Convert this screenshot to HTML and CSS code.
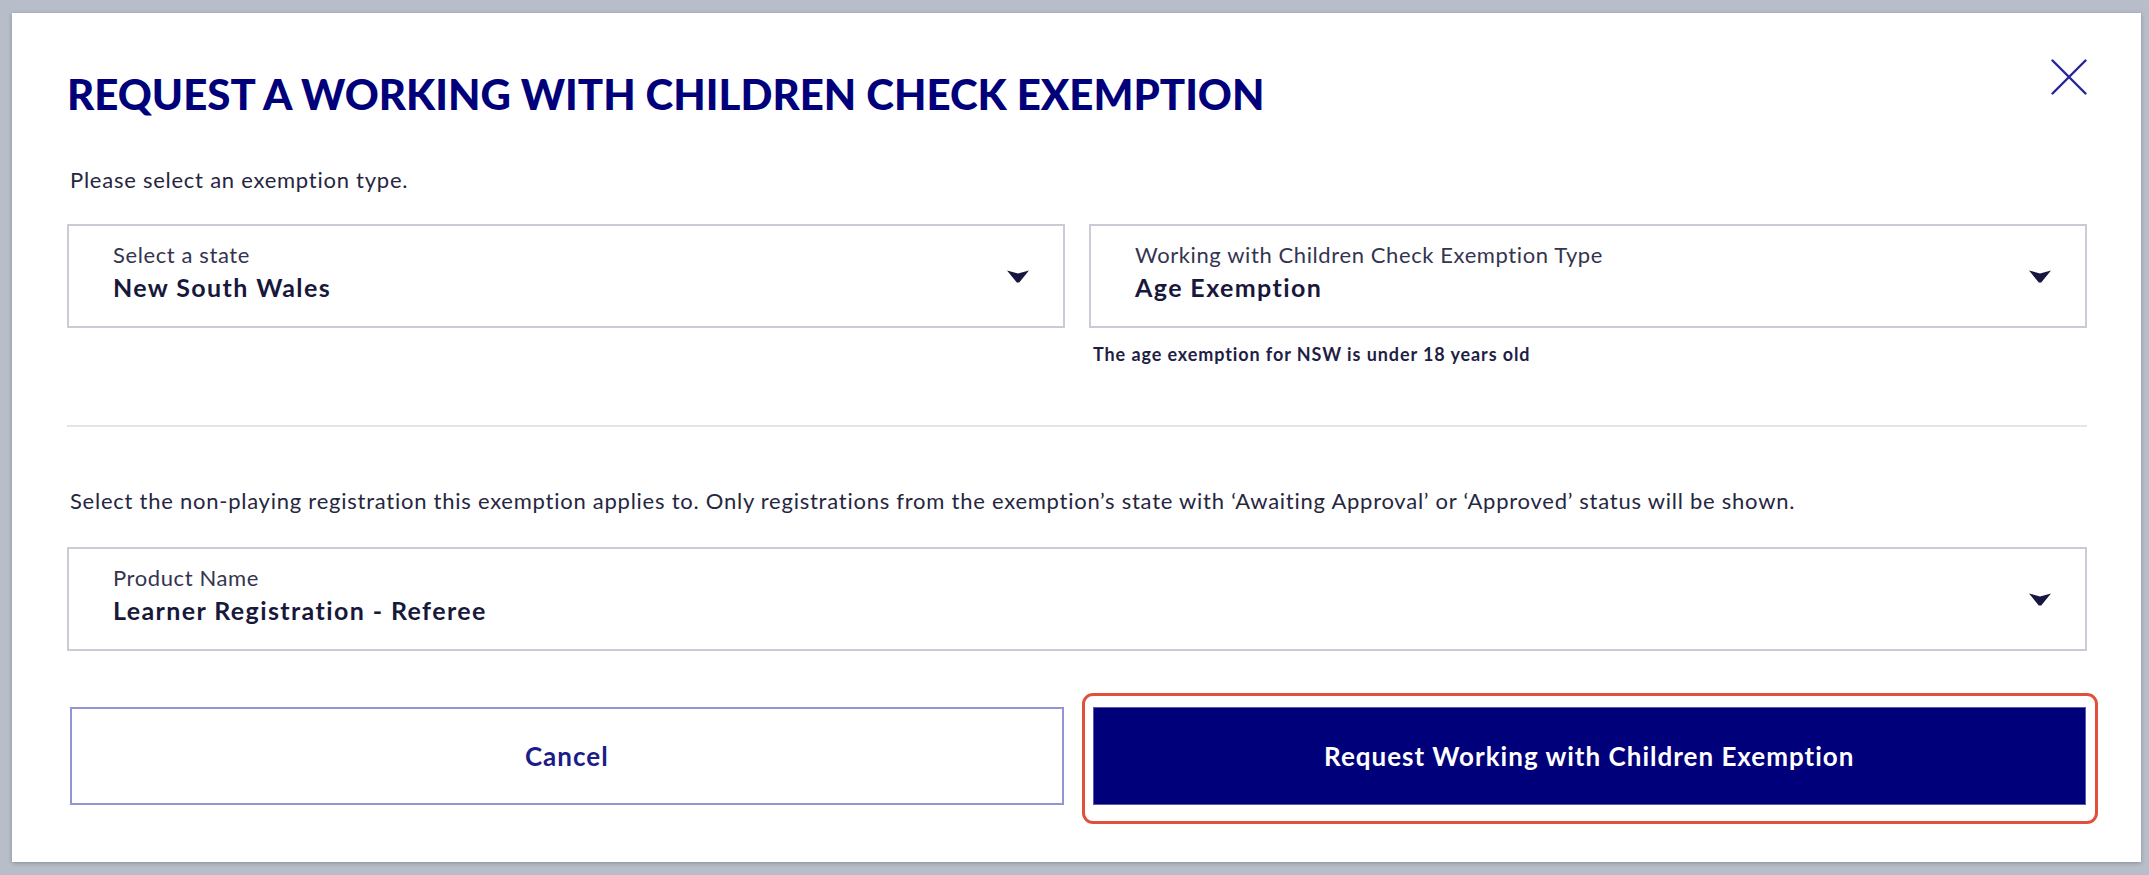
FILE: index.html
```html
<!DOCTYPE html>
<html lang="en">
<head>
<meta charset="utf-8">
<title>Request a Working with Children Check Exemption</title>
<link rel="stylesheet" href="styles.css">
</head>
<body>
<div class="modal">
  <div class="modal-header">
    <h1 class="modal-title">REQUEST A WORKING WITH CHILDREN CHECK EXEMPTION</h1>
    <button class="close-btn" aria-label="Close">
      <svg width="36" height="36" viewBox="0 0 36 36"><path d="M1.5 1.5 L34.5 34.5 M34.5 1.5 L1.5 34.5" stroke="#25259a" stroke-width="2.4" fill="none" stroke-linecap="round"/></svg>
    </button>
  </div>

  <p class="intro">Please select an exemption type.</p>

  <div class="select-row">
    <div class="field">
      <div class="select-box">
        <div class="select-text">
          <div class="select-label">Select a state</div>
          <div class="select-value">New South Wales</div>
        </div>
        <svg class="caret" width="22" height="13" viewBox="0 0 22 13"><path d="M0 0.5 L11 3.5 L22 0.5 L12.2 12.5 L9.8 12.5 Z" fill="#161640"/></svg>
      </div>
    </div>
    <div class="field">
      <div class="select-box">
        <div class="select-text">
          <div class="select-label">Working with Children Check Exemption Type</div>
          <div class="select-value">Age Exemption</div>
        </div>
        <svg class="caret" width="22" height="13" viewBox="0 0 22 13"><path d="M0 0.5 L11 3.5 L22 0.5 L12.2 12.5 L9.8 12.5 Z" fill="#161640"/></svg>
      </div>
      <div class="helper">The age exemption for NSW is under 18 years old</div>
    </div>
  </div>

  <hr class="divider">

  <p class="intro intro-2">Select the non-playing registration this exemption applies to. Only registrations from the exemption’s state with ‘Awaiting Approval’ or ‘Approved’ status will be shown.</p>

  <div class="select-box product-box">
    <div class="select-text">
      <div class="select-label">Product Name</div>
      <div class="select-value">Learner Registration - Referee</div>
    </div>
    <svg class="caret" width="22" height="13" viewBox="0 0 22 13"><path d="M0 0.5 L11 3.5 L22 0.5 L12.2 12.5 L9.8 12.5 Z" fill="#161640"/></svg>
  </div>

  <div class="actions">
    <button class="btn btn-cancel">Cancel</button>
    <div class="highlight">
      <button class="btn btn-primary">Request Working with Children Exemption</button>
    </div>
  </div>
</div>
</body>
</html>
```

FILE: styles.css
```css
* { box-sizing: border-box; }

html, body {
  margin: 0;
  height: 100%;
}

body {
  background: #b7bec9;
  padding: 13px 8px 13px 12px;
  font-family: Lato, "Liberation Sans", sans-serif;
  color: #26263f;
}

.modal {
  background: #ffffff;
  height: 849px;
  padding: 46px 54px 57px 55px;
  box-shadow: 0 1px 4px rgba(40, 50, 70, 0.35);
  display: flex;
  flex-direction: column;
}

.modal-header {
  display: flex;
  justify-content: space-between;
  align-items: flex-start;
  height: 56px;
}

.modal-title {
  margin: 14px 0 0 0;
  font-family: Lato, "Liberation Sans", sans-serif;
  font-weight: 900;
  font-size: 42px;
  line-height: 42px;
  color: #00007a;
}

.close-btn {
  border: 0;
  background: none;
  padding: 0;
  width: 36px;
  height: 36px;
  cursor: pointer;
}
.close-btn svg { display: block; }

.intro {
  margin: 53px 0 0 0;
  font-size: 22px;
  line-height: 24px;
  letter-spacing: 0.75px;
  padding-left: 3px;
  color: #26263f;
}

.select-row {
  margin-top: 32px;
  display: grid;
  grid-template-columns: 1fr 1fr;
  column-gap: 24px;
}

.select-box {
  height: 104px;
  border: 2px solid #c9cbd6;
  display: flex;
  align-items: center;
  padding: 0 34px 0 44px;
}

.select-text {
  flex: 1;
  display: flex;
  flex-direction: column;
  align-self: flex-start;
  padding-top: 16px;
}

.select-label {
  font-size: 22px;
  line-height: 26px;
  letter-spacing: 0.6px;
  color: #34344f;
}

.select-value {
  margin-top: 5px;
  font-size: 25px;
  line-height: 28px;
  letter-spacing: 1.4px;
  font-weight: 700;
  color: #18183c;
}

.caret { display: block; flex: none; }

.helper {
  margin-top: 16px;
  padding-left: 4px;
  font-size: 18px;
  line-height: 20px;
  letter-spacing: 0.9px;
  font-weight: 700;
  color: #1f1f45;
}

.divider {
  margin: 61px 0 0 0;
  border: 0;
  height: 2px;
  background: #e4e5ea;
}

.intro-2 {
  margin-top: 62px;
}

.product-box {
  margin-top: 34px;
}

.actions {
  margin: 56px 1px 0 3px;
  display: grid;
  grid-template-columns: 1fr 1fr;
  column-gap: 29px;
}

.btn {
  height: 98px;
  width: 100%;
  font-family: Lato, "Liberation Sans", sans-serif;
  font-size: 26px;
  letter-spacing: 1px;
  font-weight: 700;
  cursor: pointer;
}

.btn-cancel {
  background: #ffffff;
  border: 2px solid #9494da;
  color: #1c1c88;
}

.highlight {
  position: relative;
}

.highlight::after {
  content: "";
  position: absolute;
  left: -11px;
  right: -12px;
  top: -14px;
  bottom: -19px;
  border: 3px solid #e0503a;
  border-radius: 11px;
  pointer-events: none;
}

.btn-primary {
  display: block;
  background: #00007a;
  border: 1px solid #5a5ab0;
  color: #ffffff;
}
```
